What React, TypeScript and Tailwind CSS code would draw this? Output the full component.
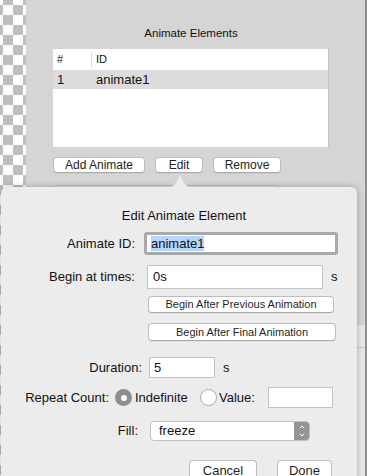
import { ChevronDown, ChevronUp } from "lucide-react";

const font = "font-['Liberation_Sans',Arial,sans-serif]";

function MacButton({ label, className }: { label: string; className: string }) {
  return (
    <div
      className={`flex items-center justify-center rounded-[4px] border border-[#bdbdbd] border-b-[#a9a9a9] bg-white text-[#1f1f1f] shadow-[0_0.5px_0.5px_rgba(0,0,0,0.08)] ${className}`}
    >
      {label}
    </div>
  );
}

function Radio({ checked }: { checked: boolean }) {
  return checked ? (
    <div className="flex h-[17px] w-[17px] items-center justify-center rounded-full bg-[#8e8e8e]">
      <div className="h-[6px] w-[6px] rounded-full bg-white" />
    </div>
  ) : (
    <div className="h-[17px] w-[17px] rounded-full border border-[#a8a8a8] bg-white" />
  );
}

export default function App() {
  return (
    <div className={`relative flex h-[476px] w-[367px] overflow-hidden text-[#111] ${font}`}>
      {/* transparent canvas */}
      <div className="w-[26px] shrink-0 bg-[repeating-conic-gradient(#bebebe_0_25%,#ffffff_0_50%)] bg-[length:20px_20px] bg-[position:-7px_-5px]" />

      {/* side panel */}
      <div className="flex flex-1 flex-col border-r-2 border-[#8f8f8f]">
        <div className="flex h-[325px] flex-col bg-[#d5d5d5] pl-[27px]">
          <div className="mt-[26px] w-[276px] text-center text-[11.5px] leading-[14px]">Animate Elements</div>

          <div className="mt-[9px] h-[98px] w-[276px] border-r border-[#c4c4c4] bg-white">
            <div className="flex h-[21px] items-center text-[11px]">
              <span className="w-[38px] pl-[4px]">#</span>
              <div className="h-[16px] w-px bg-[#dedede]" />
              <span className="pl-[4px]">ID</span>
            </div>
            <div className="flex h-[19px] items-center bg-[#dcdcdc] text-[13px]">
              <span className="w-[39px] pl-[4px]">1</span>
              <span className="pl-[4px]">animate1</span>
            </div>
          </div>

          <div className="mt-[10px] flex gap-[10px] text-[12px]">
            <MacButton label="Add Animate" className="h-[16px] w-[92px]" />
            <MacButton label="Edit" className="h-[16px] w-[48px]" />
            <MacButton label="Remove" className="h-[16px] w-[68px]" />
          </div>

          <div className="mt-[12px] h-[24px] w-[227px] rounded-[4px] border border-[#bcbcbc] bg-[#e2e2e2]" />
        </div>
        <div className="h-[23px] border-b border-[#c9c9c9] bg-[#e7e7e7]" />
        <div className="flex-1 bg-[#e7e7e7]" />
      </div>

      {/* popover */}
      <div className="absolute left-[1px] top-[187px] h-[310px] w-[356px] rounded-[6px] bg-[#ececec] shadow-[0_0_6px_rgba(0,0,0,0.28)]">
        <svg className="absolute left-[166px] top-[-12px]" width="26" height="13" viewBox="0 0 26 13">
          <path d="M0 13 C5 13 8 9 10 6 C11.5 3.5 12 0.5 13 0.5 C14 0.5 14.5 3.5 16 6 C18 9 21 13 26 13 Z" fill="#ececec" />
        </svg>

        <div className="flex flex-col text-[13px]">
          <div className="mt-[21px] pl-[10px] text-center leading-[16px]">Edit Animate Element</div>

          <div className="mt-[8px] flex items-center">
            <span className="w-[134px] text-right">Animate ID:</span>
            <div className="ml-[9px] flex h-[23px] w-[194px] items-center rounded-[3px] border-[3px] border-[#a9a9a9] bg-white pl-[4px]">
              <span className="bg-[#b5d5fd] leading-[15px]">animate1</span>
            </div>
          </div>

          <div className="mt-[10px] flex items-center">
            <span className="w-[134px] text-right">Begin at times:</span>
            <div className="ml-[12px] flex h-[24px] w-[176px] items-center border border-[#c2c2c2] bg-white pl-[5px]">0s</div>
            <span className="ml-[8px]">s</span>
          </div>

          <MacButton label="Begin After Previous Animation" className="ml-[147px] mt-[7px] h-[17px] w-[186px] text-[11px]" />
          <MacButton label="Begin After Final Animation" className="ml-[147px] mt-[10px] h-[18px] w-[188px] text-[11px]" />

          <div className="mt-[16px] flex items-center">
            <span className="w-[141px] text-right">Duration:</span>
            <div className="ml-[7px] flex h-[21px] w-[66px] items-center border border-[#c2c2c2] bg-white pl-[4px]">5</div>
            <span className="ml-[8px]">s</span>
          </div>

          <div className="mt-[9px] flex h-[21px] items-center">
            <span className="w-[108px] text-right">Repeat Count:</span>
            <div className="ml-[6px]">
              <Radio checked />
            </div>
            <span className="ml-[3px] w-[60px]">Indefinite</span>
            <div className="ml-[5px]">
              <Radio checked={false} />
            </div>
            <span className="ml-[2px] w-[37px]">Value:</span>
            <div className="ml-[12px] h-[21px] w-[65px] border border-[#c2c2c2] bg-white" />
          </div>

          <div className="mt-[13px] flex items-center">
            <span className="w-[137px] text-right">Fill:</span>
            <div className="ml-[12px] flex h-[20px] w-[160px] items-center rounded-[4px] border border-[#c0c0c0] bg-white">
              <span className="flex-1 pl-[8px]">freeze</span>
              <div className="flex h-[18px] w-[15px] flex-col items-center justify-center rounded-r-[3px] bg-[#949494] text-white">
                <ChevronUp size={8} strokeWidth={3} />
                <ChevronDown size={8} strokeWidth={3} />
              </div>
            </div>
          </div>

          <div className="mt-[19px] flex">
            <MacButton label="Cancel" className="ml-[188px] h-[21px] w-[68px] text-[13px]" />
            <MacButton label="Done" className="ml-[20px] h-[21px] w-[55px] text-[13px]" />
          </div>
        </div>
      </div>
    </div>
  );
}
